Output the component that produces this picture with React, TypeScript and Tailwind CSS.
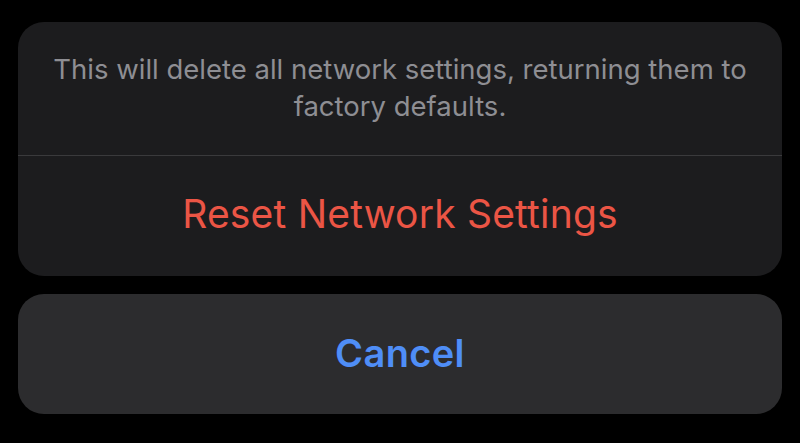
export default function App() {
  return (
    <div className="flex h-[443px] w-[800px] flex-col gap-[18px] bg-black px-[18px] pt-[22px] font-['Inter',sans-serif]">
      {/* Sheet */}
      <div className="overflow-hidden rounded-[26px] bg-[#1c1c1e]">
        <div className="flex h-[133px] items-center justify-center px-6 pb-px text-center text-[27.5px] leading-[37px] text-[#8e8e93]">
          <p>
            This will delete all network settings, returning them to
            <br />
            factory defaults.
          </p>
        </div>
        <div className="h-px bg-[#3a3a3c]" />
        <button className="flex h-[120px] w-full items-center justify-center pb-1 text-[39px] tracking-[0.005em] text-[#eb5545]">
          Reset Network Settings
        </button>
      </div>

      {/* Cancel */}
      <button className="flex h-[120px] w-full items-center justify-center rounded-[26px] bg-[#2c2c2e] pb-0.5 text-[38px] font-semibold tracking-[0.01em] text-[#4f8ef7]">
        Cancel
      </button>
    </div>
  );
}
